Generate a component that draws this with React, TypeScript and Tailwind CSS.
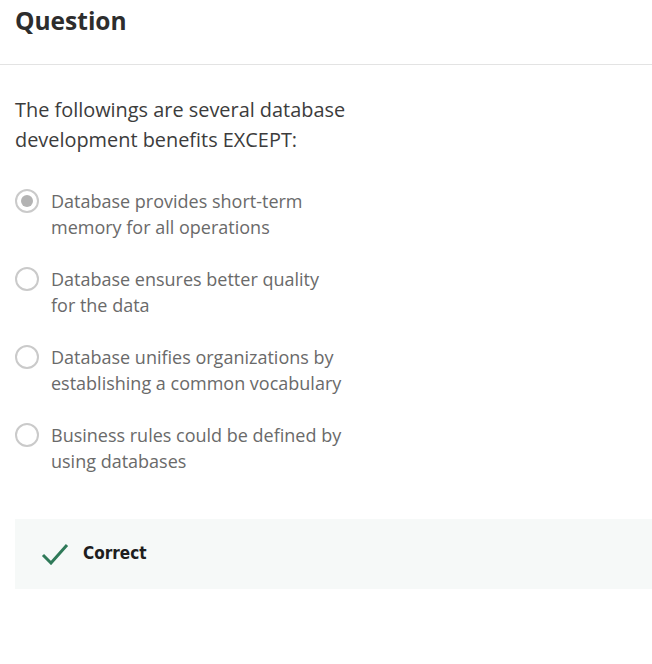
const options = [
    { text: ['Database provides short-term', 'memory for all operations'], checked: true },
    { text: ['Database ensures better quality', 'for the data'], checked: false },
    { text: ['Database unifies organizations by', 'establishing a common vocabulary'], checked: false },
    { text: ['Business rules could be defined by', 'using databases'], checked: false },
];

function Radio({ checked }: { checked: boolean }) {
    return (
        <div className="mt-[1px] flex h-[24px] w-[24px] shrink-0 items-center justify-center rounded-full border-2 border-[#cacaca] bg-white">
            {checked && <div className="h-[12px] w-[12px] rounded-full bg-[#b3b3b3]" />}
        </div>
    );
}

export default function App() {
    return (
        <div className="min-h-[664px] w-[652px] bg-white font-['Open_Sans',sans-serif] text-[#333]">
            <div className="flex h-[65px] items-start border-b border-[#e3e3e3] px-[15px] pt-[3px]">
                <h1 className="text-[24.5px] font-bold leading-[36px] text-[#2d2d2d]">Question</h1>
            </div>
            <div className="pl-[15px] pt-[30px]">
                <p className="text-[19.9px] leading-[30px] text-[#3c3c3c]">
                    The followings are several database
                    <br />
                    development benefits EXCEPT:
                </p>
                <div className="mt-[33px] flex flex-col gap-[26px]">
                    {options.map((o, i) => (
                        <label key={i} className="flex items-start gap-[12px]">
                            <Radio checked={o.checked} />
                            <span className="text-[18px] leading-[26px] text-[#6a6a6a]">
                                {o.text[0]}
                                <br />
                                {o.text[1]}
                            </span>
                        </label>
                    ))}
                </div>
                <div className="mt-[45px] flex h-[70px] items-center gap-[14px] bg-[#f6f9f8] pl-[26px]">
                    <svg width="28" height="22" viewBox="0 0 28 22" fill="none">
                        <path d="M2 12 L10 20 L26 2" stroke="#2f7a59" strokeWidth="3" />
                    </svg>
                    <span className="font-['DejaVu_Sans_Condensed','Open_Sans',sans-serif] text-[17px] font-bold text-[#1e1e1e]">Correct</span>
                </div>
            </div>
        </div>
    );
}
